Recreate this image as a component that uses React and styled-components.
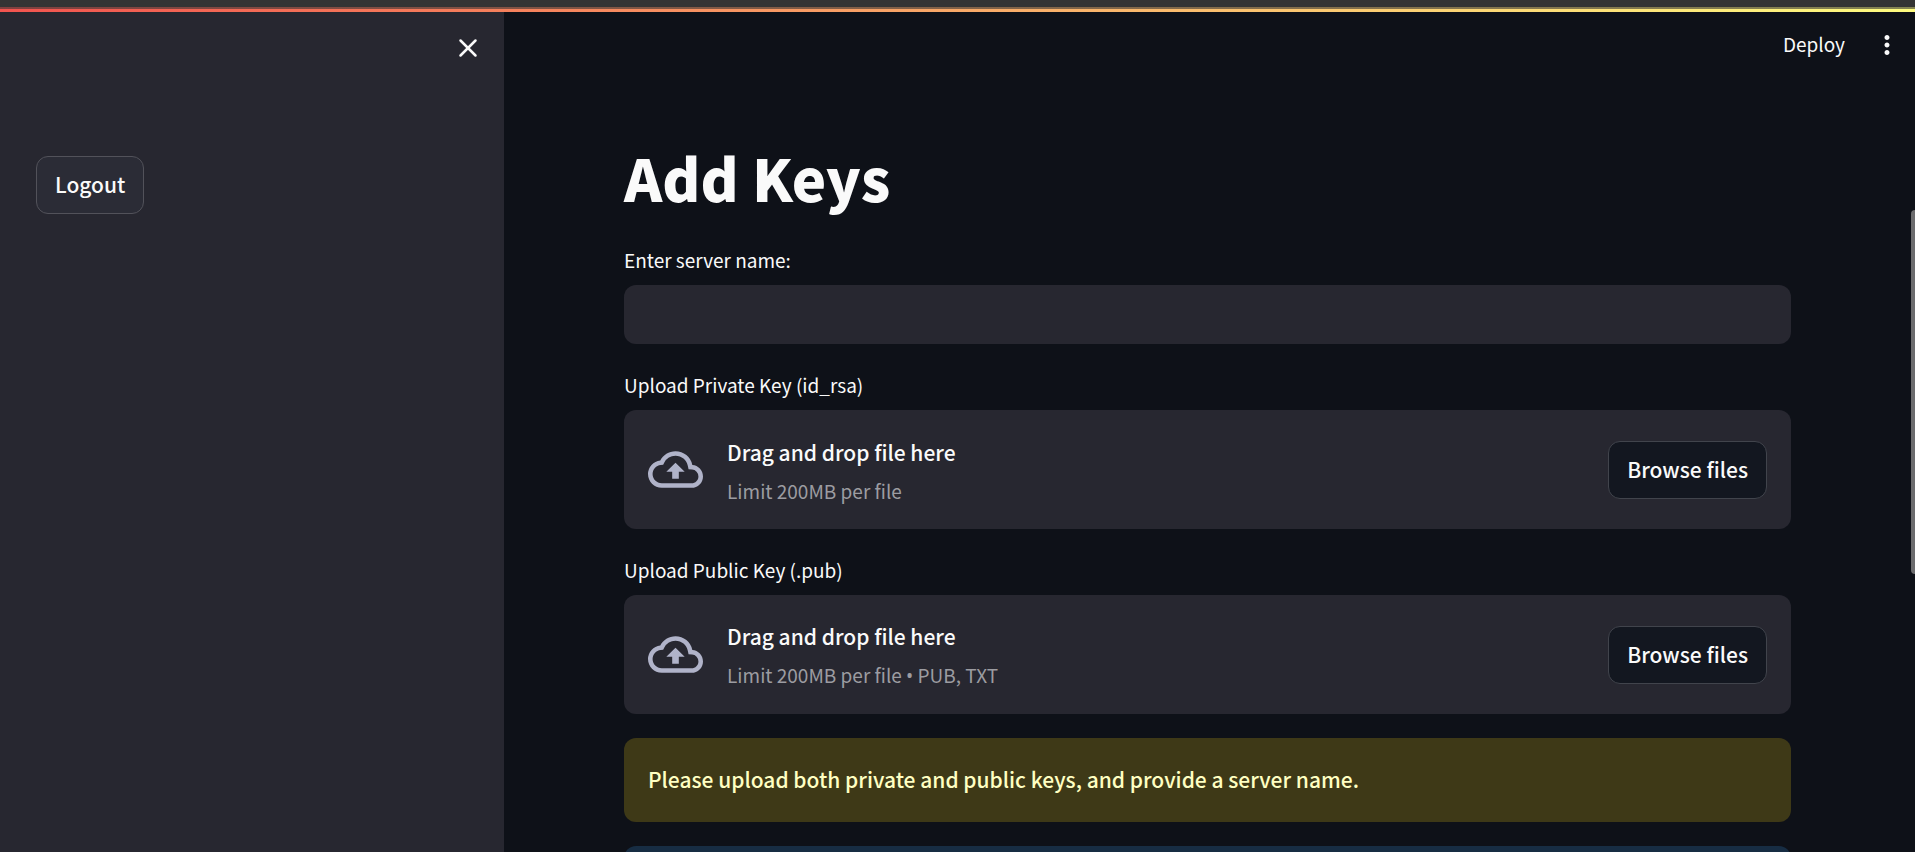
import React from "react";
import styled, { createGlobalStyle } from "styled-components";
import { X } from "lucide-react";
import { MdMoreVert, MdOutlineBackup } from "react-icons/md";

const GlobalStyle = createGlobalStyle`
  *, *::before, *::after { box-sizing: border-box; }
  body {
    margin: 0;
    background: #0e1118;
    color: #fafafa;
    font-family: "Noto Sans CJK SC", "Noto Sans", sans-serif;
    font-size: 21px;
    font-weight: 500;
    line-height: 36px;
  }
  button, input { font: inherit; color: inherit; }
`;

const Page = styled.div`
  position: relative;
  display: flex;
  flex-direction: column;
  height: 100vh;
  overflow: hidden;
`;

const TopStrip = styled.div`
  flex: none;
  height: 7px;
  background: #343434;
`;

const Decoration = styled.div`
  flex: none;
  height: 5px;
  background:
    linear-gradient(rgba(52, 52, 52, 0.6), rgba(52, 52, 52, 0.6)) top / 100% 2px no-repeat,
    linear-gradient(90deg, #f2544f, #fffd80);
`;

const Columns = styled.div`
  flex: 1;
  display: flex;
  min-height: 0;
`;

const Sidebar = styled.aside`
  flex: none;
  width: 504px;
  padding: 20px 20px 0 36px;
  background: #272730;
`;

const SidebarHeader = styled.div`
  display: flex;
  justify-content: flex-end;
  height: 124px;
`;

const IconButton = styled.button`
  display: grid;
  place-items: center;
  width: 32px;
  height: 32px;
  padding: 0;
  border: 0;
  background: none;
`;

const Button = styled.button`
  flex: none;
  height: 58px;
  padding: 0 18px 2px;
  border: 1px solid ${(p) => (p.$raised ? "#52525a" : "#41444c")};
  border-radius: 12px;
  background: ${(p) => (p.$raised ? "#2b2c36" : "#131720")};
`;

const Main = styled.main`
  flex: 1;
  min-width: 0;
  overflow: hidden;
`;

const Toolbar = styled.header`
  display: flex;
  align-items: center;
  justify-content: flex-end;
  gap: 26px;
  height: 66px;
  padding-right: 12px;
`;

const DeployButton = styled.button`
  padding: 0 0 2px;
  border: 0;
  background: none;
  font-size: 19px;
  font-weight: 400;
`;

const Content = styled.div`
  display: flex;
  flex-direction: column;
  gap: 24px;
  padding: 60px 124px 0 120px;
`;

const Title = styled.h1`
  margin: 0 0 3px;
  font-size: 58px;
  font-weight: 900;
  line-height: 78px;
`;

const Field = styled.div`
  display: flex;
  flex-direction: column;
  gap: 8px;
`;

const Label = styled.label`
  font-size: 19px;
  font-weight: 400;
  line-height: 34px;
`;

const TextInput = styled.input`
  width: 100%;
  height: 59px;
  padding: 0 18px;
  border: 0;
  border-radius: 12px;
  background: #272730;
`;

const Dropzone = styled.section`
  display: flex;
  align-items: center;
  gap: 24px;
  height: 119px;
  padding: 0 24px;
  border-radius: 12px;
  background: #272730;
`;

const CloudIcon = styled(MdOutlineBackup)`
  flex: none;
  color: #b0b3c9;
`;

const Instructions = styled.div`
  flex: 1;
  display: flex;
  flex-direction: column;
  gap: 4px;
  padding-top: 2px;
`;

const Hint = styled.small`
  color: #9c9ca1;
  font-size: 19px;
  font-weight: 400;
  line-height: 34px;
`;

const Bullet = styled.span`
  font-family: "Noto Sans", sans-serif;
`;

const Alert = styled.div`
  flex: none;
  min-height: 84px;
  padding: 23px 24px 25px;
  border-radius: 12px;
  background: ${(p) => (p.$info ? "#172d43" : "#3e3917")};
  color: #ffffc2;
`;

const ScrollThumb = styled.div`
  position: absolute;
  top: 210px;
  right: 0;
  width: 4px;
  height: 364px;
  border-radius: 4px 0 0 4px;
  background: #6c6c6e;
`;

function Uploader({ id, label, limit, types }) {
  return (
    <Field>
      <Label htmlFor={id}>{label}</Label>
      <Dropzone>
        <CloudIcon size={55} aria-hidden="true" />
        <Instructions>
          <span>Drag and drop file here</span>
          <Hint>
            {limit}
            {types && <> <Bullet>•</Bullet> {types}</>}
          </Hint>
        </Instructions>
        <Button type="button" id={id}>Browse files</Button>
      </Dropzone>
    </Field>
  );
}

export default function App() {
  return (
    <Page>
      <GlobalStyle />
      <TopStrip />
      <Decoration />
      <Columns>
        <Sidebar>
          <SidebarHeader>
            <IconButton type="button" aria-label="Close sidebar">
              <X size={30} />
            </IconButton>
          </SidebarHeader>
          <Button type="button" $raised>Logout</Button>
        </Sidebar>
        <Main>
          <Toolbar>
            <DeployButton type="button">Deploy</DeployButton>
            <IconButton type="button" aria-label="Main menu">
              <MdMoreVert size={30} />
            </IconButton>
          </Toolbar>
          <Content>
            <Title>Add Keys</Title>
            <Field>
              <Label htmlFor="server-name">Enter server name:</Label>
              <TextInput id="server-name" type="text" />
            </Field>
            <Uploader id="private-key" label="Upload Private Key (id_rsa)" limit="Limit 200MB per file" />
            <Uploader id="public-key" label="Upload Public Key (.pub)" limit="Limit 200MB per file" types="PUB, TXT" />
            <Alert role="alert">
              Please upload both private and public keys, and provide a server name.
            </Alert>
            <Alert $info />
          </Content>
        </Main>
      </Columns>
      <ScrollThumb />
    </Page>
  );
}
